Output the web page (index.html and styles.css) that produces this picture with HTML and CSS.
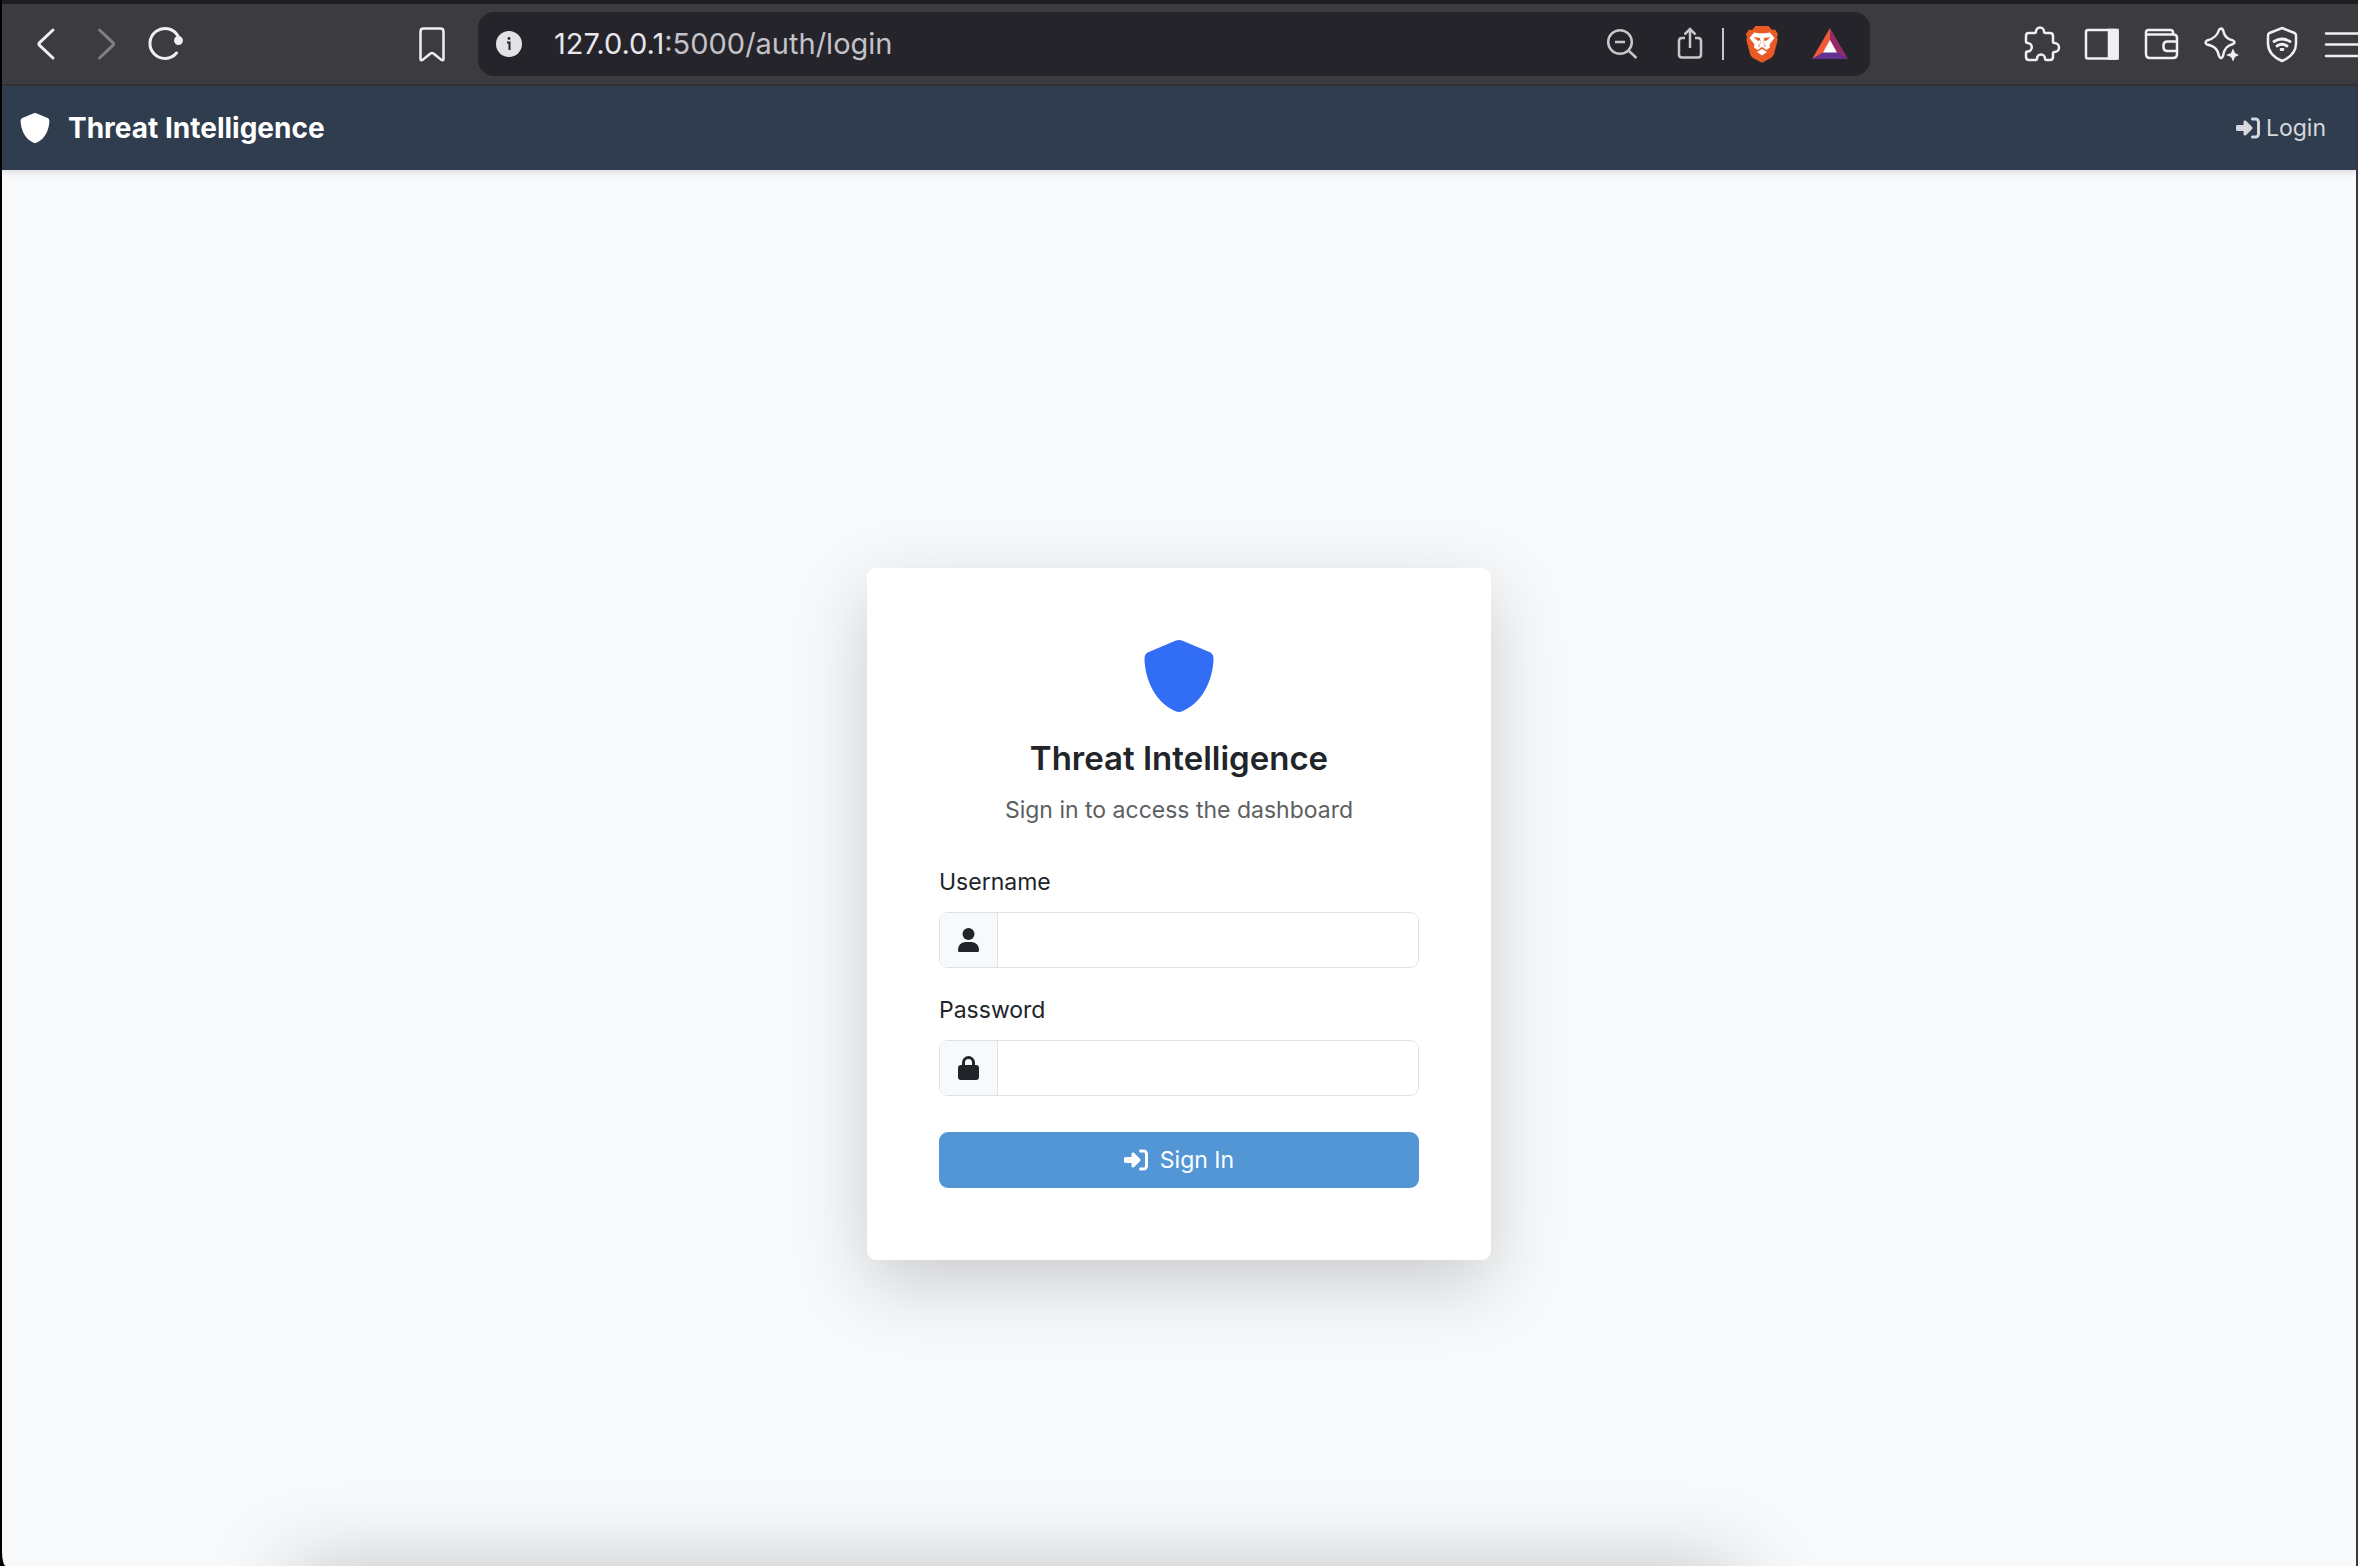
FILE: index.html
```html
<!DOCTYPE html>
<html lang="en">
<head>
<meta charset="utf-8">
<meta name="viewport" content="width=device-width, initial-scale=1">
<title>Login - Threat Intelligence</title>
<link rel="stylesheet" href="styles.css">
</head>
<body>
<svg class="defs" aria-hidden="true">
  <symbol id="shield" viewBox="0 0 46 48">
    <path d="M23 0q1 0 2 .4L43.200 8q2.800 1.300 2.800 4.200C46 22 41.500 40.500 25.300 47.500q-2.300 1-4.600 0C4.500 40.500 0 22 0 12.200Q0 9.300 2.800 8L21 .4Q22 0 23 0z" fill="currentColor"/>
  </symbol>
  <symbol id="sign-in" viewBox="0 0 512 512">
    <path fill="currentColor" d="M217.900 105.900 340.700 228.700c7.200 7.200 11.300 17.100 11.300 27.300s-4.100 20.100-11.300 27.300L217.900 406.100c-6.400 6.400-15 9.900-24 9.900-18.700 0-33.900-15.200-33.900-33.900V320H32c-17.700 0-32-14.300-32-32v-64c0-17.700 14.300-32 32-32h128v-62.100c0-18.700 15.200-33.900 33.900-33.900 9 0 17.600 3.600 24 9.900zM352 416h64c17.700 0 32-14.300 32-32V128c0-17.700-14.300-32-32-32h-64c-17.700 0-32-14.300-32-32s14.300-32 32-32h64c53 0 96 43 96 96v256c0 53-43 96-96 96h-64c-17.700 0-32-14.300-32-32s14.300-32 32-32z"/>
  </symbol>
</svg>

<div class="window">
  <header class="toolbar">
    <div class="tool-group">
      <button class="tool" aria-label="Back"><svg viewBox="0 0 36 36"><path d="M25 4 11.600 16.600q-1.500 1.400 0 2.800L25 32" stroke-width="3" stroke-linecap="round"/></svg></button>
      <button class="tool tool-off" aria-label="Forward" disabled><svg viewBox="0 0 36 36"><path d="M11.500 4l13.400 12.600q1.500 1.400 0 2.800L11.500 32" stroke-width="3" stroke-linecap="round"/></svg></button>
      <button class="tool" aria-label="Reload"><svg viewBox="0 0 36 36"><path d="M28.500 27A15 15 0 1 1 30 10" stroke-width="3" stroke-linecap="round"/><circle cx="30.500" cy="14.500" r="3.200" class="solid"/></svg></button>
    </div>
    <button class="tool bookmark" aria-label="Bookmark"><svg viewBox="0 0 36 36"><path d="M9.500 2.500h17q3 0 3 3V33q0 2-2 1l-8-6.500q-1.500-1-3 0L8.500 34q-2 1-2-1V5.500q0-3 3-3z"/></svg></button>
    <div class="address">
      <svg class="info" viewBox="0 0 26 26" aria-hidden="true"><circle cx="13" cy="13" r="13" fill="#e3e2e8"/><path d="M11 11.500h2.500v7.500" fill="none" stroke="#25242a" stroke-width="2"/><circle cx="13" cy="7.500" r="1.400" fill="#25242a"/></svg>
      <span class="url"><span class="host">127.0.0.1</span>:5000/auth/login</span>
      <div class="address-tools">
        <button class="tool muted" aria-label="Zoom out"><svg viewBox="0 0 36 36"><circle cx="16" cy="16" r="11.800"/><path d="M11 16h10M25 25l7.500 7"/></svg></button>
        <button class="tool muted share" aria-label="Share"><svg viewBox="0 0 36 36"><path d="M13 12h-3q-3 0-3 3v13.500q0 3 3 3h16q3 0 3-3V15q0-3-3-3h-3M18 22V3.500M12.500 8.500 18 3l5.500 5.500"/></svg></button>
        <span class="divider"></span>
        <button class="tool brave" aria-label="Brave Shields"><svg viewBox="0 0 36 36"><path class="plain" fill="#e95a25" d="M11.500 0h13l3.500 4 3-.5 3 4.500-1 3 .7 3-3.700 14q-.8 2.500-3 4L19.500 36q-1.500 1-3 0L9 32q-2.200-1.500-3-4L2.300 14 3 11 2 8l3-4.500 3 .5z"/><path class="plain" fill="#fff" d="M10 6.500l5 .8h6l5-.8 4.500 5.500-5 6.500.5 3-3.500 2.500-4.500-3-4.500 3L10 21.500l.5-3-5-6.500z"/><path class="plain" fill="#e95a25" d="M9.500 11l6.500 1 .5 5-2.500 3 4 2 4-2-2.500-3 .5-5 6.500-1-4.500 4-2.500-1-.3 3 1.800 3-3 2-3-2 1.800-3-.3-3-2.500 1z"/><path class="plain" fill="#fff" d="M18 23l5 3-5 3.500-5-3.500z"/></svg></button>
        <button class="tool" aria-label="Brave Rewards"><svg viewBox="0 0 36 36"><path class="plain" fill="#f15a38" d="M18 2v15l-7 11L0 33z"/><path class="plain" fill="#942c68" d="M18 2v15l7 10 11 6z"/><path class="plain" fill="#63318f" d="M0 33l11.500-7h13L36 33z"/><path class="plain" fill="#fff" d="M18 14l7 12.500H11z"/></svg></button>
      </div>
    </div>
    <div class="tool-group right-tools">
      <button class="tool" aria-label="Extensions"><svg viewBox="0 0 36 36"><path d="M5.500 7h6q1.500 0 1.500-1.500a4 4 0 0 1 8 0q0 1.500 1.500 1.500h4.500q3 0 3 3v5.500q0 1.500 1.500 1.500a3.700 3.700 0 0 1 0 9q-1.500 0-1.500 1.500V31q0 3-3 3h-3.500q-1.500 0-1.500-1.500a4 4 0 0 0-8 0q0 1.500-1.500 1.500H6q-3 0-3-3v-4q0-1.500 1.500-1.500a4.200 4.200 0 0 0 0-8.500Q3 17 3 15.500V10q0-3 2.500-3z"/></svg></button>
      <button class="tool" aria-label="Sidebar"><svg viewBox="0 0 36 36"><rect x="3" y="4" width="31.500" height="28.500" rx="2"/><path class="solid" d="M26 4h8.500v28.500H26z"/></svg></button>
      <button class="tool" aria-label="Wallet"><svg viewBox="0 0 36 36"><path d="M30 8V6.500Q30 4 27.500 4h-22Q3 4 3 6.500V28q0 4 4 4h23q4 0 4-4V12q0-3.500-3.500-3.500H3M34 15.500h-9.500q-4 0-4 4v1.500q0 4 4 4H34"/></svg></button>
      <button class="tool" aria-label="Leo AI"><svg viewBox="0 0 36 36"><path d="M17 3q2-1 3 1c1.500 6 3.500 9 10 10.500q3 1.500 0 3.500C23.500 19.500 21 23 20 30q-2 4-4 0C14.500 23 12 20.500 4 18.500q-3-2 0-4C12 12.500 14.500 9 16 4q.3-.8 1-1z"/><path class="plain" fill="#f0f0f3" d="M30 22.500l2 4.500 4 2-4 2-2 4.500-2-4.500-5-2 5-2z"/></svg></button>
      <button class="tool" aria-label="VPN"><svg viewBox="0 0 36 36"><path d="M19 2 31.500 7q1.500.7 1.500 2.500v8C33 26 27 31.500 19 35 11 31.500 5 26 5 17.500v-8Q5 7.700 6.500 7z"/><path d="M11 15.500q8-5 16 0M14 20q5-3.500 10 0M18 23.500h2" stroke-width="2.800" stroke-linecap="round"/></svg></button>
      <button class="tool menu" aria-label="Menu"><svg viewBox="0 0 36 36"><path d="M3 7.500h36M3 18.500h36M3 30h36" stroke-linecap="round"/></svg></button>
    </div>
  </header>

  <div class="page">
    <nav class="navbar">
      <a class="brand" href="#"><svg class="brand-icon" aria-hidden="true"><use href="#shield"/></svg>Threat Intelligence</a>
      <a class="nav-link" href="#"><svg class="sign-icon" aria-hidden="true"><use href="#sign-in"/></svg>Login</a>
    </nav>
    <main class="content">
      <form class="card">
        <div class="card-head">
          <svg class="logo" aria-hidden="true"><use href="#shield"/></svg>
          <h1>Threat Intelligence</h1>
          <p>Sign in to access the dashboard</p>
        </div>
        <div class="field">
          <label for="username">Username</label>
          <div class="input-group">
            <span class="addon"><svg viewBox="0 0 21 24" aria-hidden="true"><circle cx="10.500" cy="6" r="6"/><path d="M7.500 14h6q7.500.5 7.500 8.500 0 1.500-1.500 1.500h-18Q0 24 0 22.500 0 14.500 7.500 14z"/></svg></span>
            <input id="username" type="text">
          </div>
        </div>
        <div class="field">
          <label for="password">Password</label>
          <div class="input-group">
            <span class="addon"><svg viewBox="0 0 21 24" aria-hidden="true"><path fill-rule="evenodd" d="M4 9V6.500a6.500 6.500 0 0 1 13 0V9h1q3 0 3 3v9q0 3-3 3H3q-3 0-3-3v-9q0-3 3-3zM7 9h7V6.500a3.500 3.500 0 0 0-7 0z"/></svg></span>
            <input id="password" type="password">
          </div>
        </div>
        <button class="submit" type="submit"><svg class="sign-icon" aria-hidden="true"><use href="#sign-in"/></svg>Sign In</button>
      </form>
    </main>
    <div class="edge-shadow"></div>
  </div>
</div>
</body>
</html>
```
FILE: styles.css
```css
* { box-sizing: border-box; }

body {
  margin: 0;
  background: #000;
  font-family: Inter, "Liberation Sans", sans-serif;
  font-size: 23px;
  line-height: 36px;
  color: #212529;
}

button, input { font: inherit; }
a { text-decoration: none; }
.defs { display: none; }

.window {
  display: flex;
  flex-direction: column;
  min-height: 100vh;
  padding-left: 2px;
  overflow: hidden;
}

.toolbar {
  display: flex;
  align-items: center;
  height: 86px;
  padding-left: 26px;
  border-top: 4px solid #1e1d22;
  border-bottom: 2px solid #303036;
  background: #3c3b40;
}

.tool-group { display: flex; gap: 24px; }

.tool {
  display: flex;
  flex: none;
  padding: 0;
  border: 0;
  background: none;
  color: #f0f0f3;
}

.tool svg {
  width: 36px;
  height: 36px;
  overflow: visible;
  fill: none;
  stroke: currentColor;
  stroke-width: 2.5;
}

.tool .solid { fill: currentColor; }
.tool .plain { stroke: none; }
.tool-off { color: #817f86; }
.muted { color: #c8c6cc; }
.bookmark { margin-left: 230px; }

.address {
  display: flex;
  flex: 1;
  align-items: center;
  height: 64px;
  margin-left: 28px;
  padding: 0 22px 0 18px;
  border-radius: 16px;
  background: #25242a;
}

.info { width: 26px; height: 26px; }

.url {
  margin-left: 32px;
  font-size: 29px;
  color: #c4c2c9;
}

.host { color: #e8e7ec; }

.address-tools {
  display: flex;
  align-items: center;
  gap: 32px;
  margin-left: auto;
}

.divider {
  width: 2px;
  height: 32px;
  margin-left: -18px;
  background: #c8c6cc;
}

.brave { margin-left: -12px; }
.right-tools { margin-left: 153px; }
.menu { margin-right: -1px; }

.page {
  position: relative;
  display: flex;
  flex: 1;
  flex-direction: column;
  border-right: 2px solid #38393d;
  border-bottom-left-radius: 4px 14px;
  background: #f8f9fb;
  overflow: hidden;
}

.navbar {
  display: flex;
  align-items: center;
  justify-content: space-between;
  height: 84px;
  padding: 0 30px 0 18px;
  background: #303d4e;
  box-shadow: 0 3px 6px rgba(0, 0, 0, .1);
}

.brand {
  display: flex;
  align-items: center;
  gap: 18px;
  font-size: 28px;
  font-weight: 700;
  color: #fff;
}

.brand-icon { width: 30px; height: 30px; }

.nav-link {
  display: flex;
  align-items: center;
  gap: 6px;
  color: #d6d8dc;
}

.sign-icon { width: 24px; height: 24px; }

.content {
  display: flex;
  flex: 1;
  align-items: center;
  justify-content: center;
  padding: 92px 24px 0;
}

.card {
  width: 624px;
  padding: 72px;
  border-radius: 9px;
  background: #fff;
  box-shadow: 0 24px 72px rgba(0, 0, 0, .18);
}

.card-head {
  display: flex;
  flex-direction: column;
  align-items: center;
  margin-bottom: 36px;
}

.logo {
  width: 72px;
  height: 72px;
  margin-bottom: 24px;
  color: #326df5;
}

h1 {
  margin: 0 0 12px;
  font-size: 33px;
  font-weight: 600;
  line-height: 44px;
}

p { margin: 0; color: #5c5f62; }

.field { margin-bottom: 24px; }

label { display: block; margin-bottom: 12px; }

.input-group {
  display: flex;
  height: 56px;
  border: 1px solid #dee2e6;
  border-radius: 9px;
  overflow: hidden;
}

.addon {
  display: flex;
  align-items: center;
  justify-content: center;
  width: 58px;
  border-right: 1px solid #dee2e6;
  background: #f8f9fb;
}

.addon svg { width: 21px; height: 24px; fill: #212529; }

.input-group input {
  flex: 1;
  min-width: 0;
  padding: 0 18px;
  border: 0;
  outline: 0;
}

.submit {
  display: flex;
  align-items: center;
  justify-content: center;
  gap: 12px;
  width: 100%;
  height: 56px;
  margin-top: 36px;
  border: 0;
  border-radius: 9px;
  background: #5296d5;
  color: #fff;
}

/* Soft shadow rising from below the window edge */
.edge-shadow {
  position: absolute;
  top: 100%;
  left: 290px;
  right: 620px;
  height: 60px;
  box-shadow: 0 8px 84px rgba(0, 0, 0, .28);
}
```
